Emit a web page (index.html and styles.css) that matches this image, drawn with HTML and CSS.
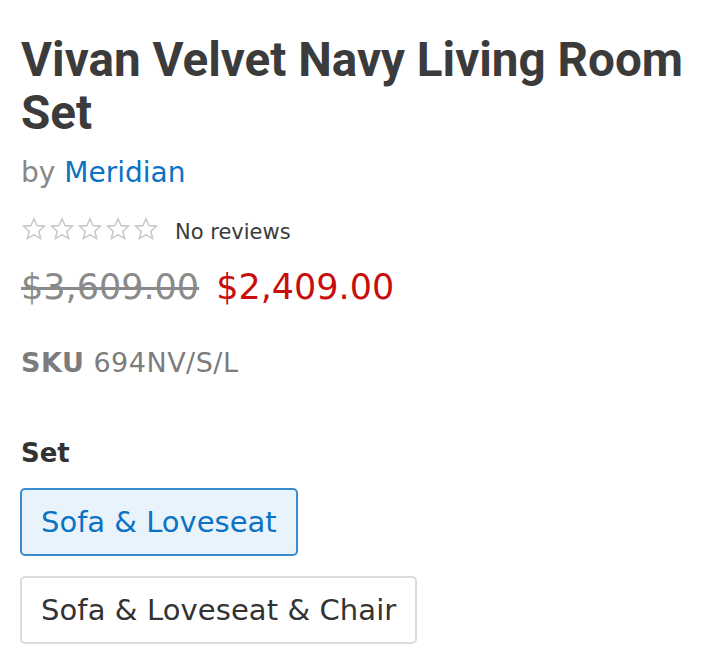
FILE: index.html
```html
<!DOCTYPE html>
<html>
<head>
<meta charset="utf-8">
<link rel="stylesheet" href="styles.css">
</head>
<body>
<div class="product">
  <h1 class="title">Vivan Velvet Navy Living Room Set</h1>
  <div class="vendor">by <a class="vendor-link">Meridian</a></div>
  <div class="rating">
    <span class="stars">
      <svg class="star" viewBox="0 0 24 24"><path d="M12 2.5l2.8 6.3 6.9.6-5.2 4.6 1.6 6.8L12 17.3l-6.1 3.5 1.6-6.8-5.2-4.6 6.9-.6z"/></svg>
      <svg class="star" viewBox="0 0 24 24"><path d="M12 2.5l2.8 6.3 6.9.6-5.2 4.6 1.6 6.8L12 17.3l-6.1 3.5 1.6-6.8-5.2-4.6 6.9-.6z"/></svg>
      <svg class="star" viewBox="0 0 24 24"><path d="M12 2.5l2.8 6.3 6.9.6-5.2 4.6 1.6 6.8L12 17.3l-6.1 3.5 1.6-6.8-5.2-4.6 6.9-.6z"/></svg>
      <svg class="star" viewBox="0 0 24 24"><path d="M12 2.5l2.8 6.3 6.9.6-5.2 4.6 1.6 6.8L12 17.3l-6.1 3.5 1.6-6.8-5.2-4.6 6.9-.6z"/></svg>
      <svg class="star" viewBox="0 0 24 24"><path d="M12 2.5l2.8 6.3 6.9.6-5.2 4.6 1.6 6.8L12 17.3l-6.1 3.5 1.6-6.8-5.2-4.6 6.9-.6z"/></svg>
    </span>
    <span class="review-text">No reviews</span>
  </div>
  <div class="prices">
    <span class="price-old">$3,609.00</span>
    <span class="price-new">$2,409.00</span>
  </div>
  <div class="sku"><span class="sku-label">SKU</span> 694NV/S/L</div>
  <div class="option">
    <div class="option-label">Set</div>
    <div class="option-values">
      <button class="opt opt-active">Sofa &amp; Loveseat</button>
      <button class="opt">Sofa &amp; Loveseat &amp; Chair</button>
    </div>
  </div>
</div>
</body>
</html>
```

FILE: styles.css
```css
html, body {
  margin: 0;
  padding: 0;
  background: #fff;
}
.product {
  padding: 34px 20px 0 21px;
  font-family: "DejaVu Sans", Verdana, sans-serif;
  color: #333;
}
.title {
  margin: 0;
  font-family: Roboto, "Liberation Sans", Arial, sans-serif;
  font-weight: bold;
  font-size: 47.6px;
  line-height: 53px;
  color: #3b3b3b;
}
.vendor {
  margin-top: 15px;
  font-size: 28px;
  line-height: 36px;
  color: #888;
}
.vendor-link {
  color: #0b72c4;
  text-decoration: none;
}
.rating {
  display: flex;
  align-items: center;
  margin-top: 23px;
  height: 30px;
}
.stars {
  display: flex;
  gap: 2px;
}
.star {
  width: 26px;
  height: 26px;
  fill: none;
  stroke: #c4c4c4;
  stroke-width: 1.3;
  stroke-linejoin: miter;
}
.review-text {
  margin-left: 16px;
  font-size: 21px;
  color: #3b3b3b;
  position: relative;
  top: 3px;
}
.prices {
  margin-top: 21px;
  font-size: 35px;
  line-height: 44px;
  display: flex;
  gap: 17px;
}
.price-old {
  color: #8a8a8a;
  text-decoration: line-through;
}
.price-new {
  color: #c70d0d;
}
.sku {
  margin-top: 37px;
  font-size: 27px;
  line-height: 34px;
  letter-spacing: 0.5px;
  color: #7c7c7c;
}
.sku-label {
  font-weight: bold;
}
.option {
  margin-top: 57px;
}
.option-label {
  font-size: 26px;
  font-weight: bold;
  line-height: 32px;
  color: #333;
}
.option-values {
  display: flex;
  flex-direction: column;
  align-items: flex-start;
  gap: 20px;
  margin-top: 19px;
  margin-left: -1px;
}
.opt {
  font-family: "DejaVu Sans", Verdana, sans-serif;
  font-size: 29px;
  height: 68px;
  padding: 0 19px;
  border: 2px solid #dcdcdc;
  border-radius: 5px;
  background: #fff;
  color: #333;
  letter-spacing: 0.1px;
}
.opt-active {
  border-color: #3a8ccf;
  background: #e9f3fb;
  color: #0b72c4;
  letter-spacing: 0;
}
```
